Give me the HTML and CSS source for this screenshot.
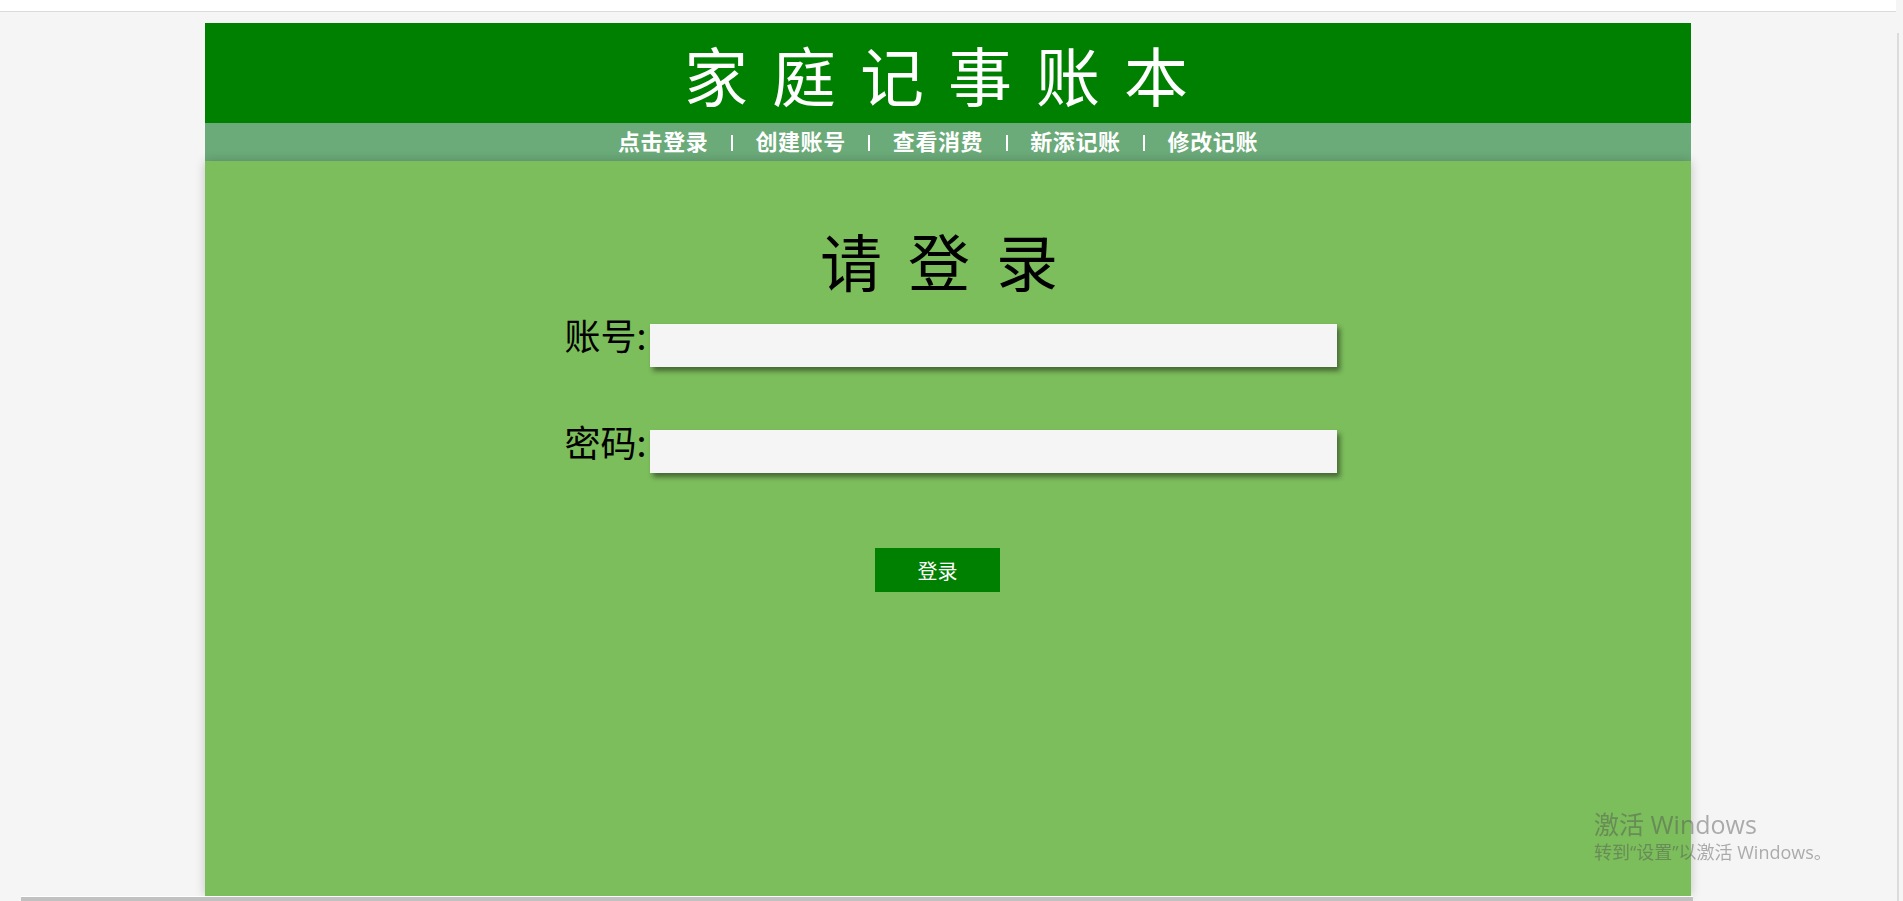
FILE: index.html
```html
<!DOCTYPE HTML>
<html>

<head>
    <meta charset="utf-8">
    <title>家庭记事账本</title>
    <meta name="viewport" content="width=device-width, initial-scale=1">
    <link rel="stylesheet" href="styles.css">
</head>

<body>
    <div class="browser-top"></div>

    <div class="container">
        <!-- 标题 -->
        <div class="header">
            <h1>家庭记事账本</h1>
        </div>

        <!-- 导航 -->
        <div class="nav">
            <a href="#">点击登录</a>
            <span class="sep"></span>
            <a href="#">创建账号</a>
            <span class="sep"></span>
            <a href="#">查看消费</a>
            <span class="sep"></span>
            <a href="#">新添记账</a>
            <span class="sep"></span>
            <a href="#">修改记账</a>
        </div>

        <!-- 登录 -->
        <div class="content">
            <h2>请登录</h2>
            <form class="login-form">
                <div class="row">
                    <label for="user">账号:</label>
                    <input type="text" id="user" class="input">
                </div>
                <div class="row row-second">
                    <label for="pwd">密码:</label>
                    <input type="password" id="pwd" class="input">
                </div>
                <div class="submit">
                    <button type="button" class="button">登录</button>
                </div>
            </form>
        </div>
    </div>

    <div class="scroll-v"></div>
    <div class="scroll-h"></div>

    <div class="activate">
        <p class="activate-title">激活 Windows</p>
        <p class="activate-text">转到“设置”以激活 Windows。</p>
    </div>
</body>

</html>
```

FILE: styles.css
```css
html {
    font-family: "Noto Sans CJK SC", "Noto Sans", sans-serif;
}

body {
    margin: 0;
    padding-right: 7px;
    height: 901px;
    overflow: hidden;
    background-color: #f5f5f5;
}

.browser-top {
    height: 11px;
    background-color: #fff;
    border-bottom: 1px solid #dadada;
}

.container {
    width: 1486px;
    margin: 11px auto 0;
}

.header {
    height: 100px;
    background-color: #008000;
    display: flex;
    align-items: center;
    justify-content: center;
}

.header h1 {
    margin: 0;
    color: #fff;
    font-size: 64px;
    font-weight: normal;
    letter-spacing: 24px;
}

.nav {
    box-sizing: border-box;
    height: 38px;
    padding: 0 20px 4px 0;
    background-color: #6baa79;
    display: flex;
    align-items: center;
    justify-content: center;
    gap: 22.5px;
}

.nav a {
    color: #fff;
    font-size: 22px;
    font-weight: bold;
    letter-spacing: 0.6px;
    line-height: 34px;
    text-decoration: none;
}

.nav .sep {
    width: 2px;
    height: 16px;
    margin-top: 5px;
    background-color: #fff;
}

.content {
    box-sizing: border-box;
    height: 735px;
    padding-top: 54px;
    background-color: #7cbd5c;
    box-shadow: 0 0 10px rgba(0, 0, 0, .2);
}

.content h2 {
    margin: 0;
    padding-left: 8px;
    font-size: 62px;
    font-weight: normal;
    letter-spacing: 26px;
    text-align: center;
    color: #000;
}

.row {
    display: flex;
    justify-content: center;
    align-items: baseline;
    margin-top: 3px;
    padding-left: 5px;
}

.row-second {
    margin-top: 48px;
}

.row label {
    padding-right: 3px;
    font-size: 36px;
    color: #000;
}

.input {
    box-sizing: border-box;
    width: 687px;
    height: 43px;
    margin: 0;
    padding: 0 8px;
    border: none;
    outline: none;
    font-family: "Liberation Sans", sans-serif;
    font-size: 14px;
    background-color: #f5f5f5;
    box-shadow: 3px 4px 5px rgba(0, 0, 0, .45);
}

.submit {
    margin-top: 75px;
    padding-right: 21px;
    text-align: center;
}

.button {
    width: 125px;
    height: 44px;
    padding: 0;
    border: none;
    color: #fff;
    font-family: "Noto Sans CJK SC", sans-serif;
    font-size: 20px;
    background-color: #008000;
}

.button:active {
    background-color: darkgreen;
}

/* 滚动条 */
.scroll-v {
    position: fixed;
    top: 33px;
    bottom: 0;
    right: 4px;
    width: 2px;
    background-color: #dcdcdc;
}

.scroll-h {
    position: fixed;
    left: 21px;
    bottom: 0;
    width: 1672px;
    height: 4px;
    background-color: #c1c1c1;
    border-top: 1px solid #fff;
}

/* 激活提示 */
.activate {
    position: fixed;
    left: 1594px;
    top: 808px;
    color: rgba(80, 80, 80, .45);
    font-family: "Open Sans", "Noto Sans CJK SC", sans-serif;
}

.activate p {
    margin: 0;
}

.activate-title {
    font-size: 25px;
    line-height: 32px;
}

.activate-text {
    font-size: 18px;
    line-height: 24px;
}
```
